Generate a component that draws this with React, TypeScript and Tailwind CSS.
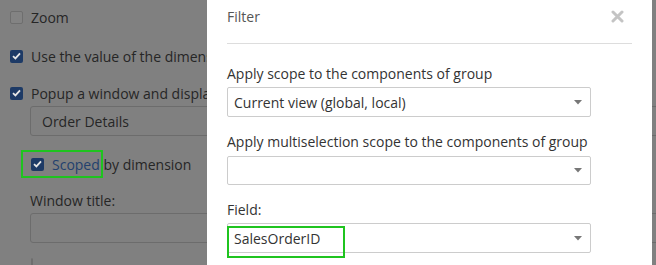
import React from "react";

const font = { fontFamily: '"Open Sans", "Noto Sans", sans-serif' };

const Check: React.FC<{ checked?: boolean }> = ({ checked }) =>
  checked ? (
    <span className="flex h-[13px] w-[13px] shrink-0 items-center justify-center rounded-[2px] bg-[#1d3a66]">
      <svg width="9" height="8" viewBox="0 0 9 8">
        <path d="M1 4.2 L3.4 6.4 L8 1.4" fill="none" stroke="#e6e6e6" strokeWidth="1.8" />
      </svg>
    </span>
  ) : (
    <span className="h-[13px] w-[13px] shrink-0 rounded-[2px] border border-[#6e6e6e] bg-[#838383]" />
  );

const Caret = () => (
  <svg width="8" height="5" viewBox="0 0 8 5" className="mr-[8px]">
    <path d="M0 0 L8 0 L4 4.5 Z" fill="#777" />
  </svg>
);

const Select: React.FC<{ value?: string; h: string; mt: string }> = ({ value, h, mt }) => (
  <div
    className={`${mt} ${h} flex w-[364px] items-center justify-between rounded-[2px] border border-[#cccccc] bg-white pl-[6px] text-[14px] text-[#333]`}
  >
    <span>{value}</span>
    <Caret />
  </div>
);

export default function App() {
  return (
    <div className="relative h-[265px] w-[656px] overflow-hidden bg-[#808080] text-[14px] text-[#262626]" style={font}>
      {/* background page (dimmed) */}
      <div className="pl-[10px]">
        <div className="mt-[7px] flex h-5 items-center gap-[8px]">
          <Check />
          <span>Zoom</span>
        </div>
        <div className="mt-[19px] flex h-5 items-center gap-[8px]">
          <Check checked />
          <span className="whitespace-nowrap">Use the value of the dimension</span>
        </div>
        <div className="mt-[17px] flex h-5 items-center gap-[8px]">
          <Check checked />
          <span className="whitespace-nowrap">Popup a window and display</span>
        </div>
        <div className="ml-[20px] mt-[3px] flex h-[30px] w-[640px] items-center rounded-[3px] border border-[#6c6c6c] pl-[11px]">
          Order Details
        </div>
        <div className="relative ml-[21px] mt-[18px] flex h-5 items-center gap-[8px]">
          <Check checked />
          <span>
            <span className="text-[#23416e]">Scoped</span> by dimension
          </span>
          <div className="absolute left-[-10px] top-[-4px] h-[28px] w-[82px] border-2 border-[#1fc41f]" />
        </div>
        <div className="ml-[20px] mt-[17px] h-5 leading-5">Window title:</div>
        <div className="ml-[20px] mt-[2px] h-[30px] w-[640px] rounded-[3px] border border-[#6c6c6c]" />
        <div className="ml-[21px] mt-[15px]">
          <Check />
        </div>
      </div>

      {/* modal */}
      <div className="absolute left-[207px] top-0 h-[265px] w-[445px] bg-white px-[20px] text-[#333]">
        <div className="flex h-[44px] items-start justify-between border-b border-[#dddddd]">
          <span className="mt-[7px] leading-5 text-[#555]">Filter</span>
          <svg width="13" height="13" viewBox="0 0 13 13" className="mr-[8px] mt-[10px]">
            <path d="M2 2 L11 11 M11 2 L2 11" stroke="#c4c4c4" strokeWidth="3" strokeLinecap="round" />
          </svg>
        </div>
        <div className="mt-[20px] leading-5">Apply scope to the components of group</div>
        <Select value="Current view (global, local)" h="h-[30px]" mt="mt-[3px]" />
        <div className="mt-[15px] leading-5">Apply multiselection scope to the components of group</div>
        <Select h="h-[29px]" mt="mt-[4px]" />
        <div className="mt-[15px] leading-5">Field:</div>
        <div className="relative">
          <Select value="SalesOrderID" h="h-[30px]" mt="mt-[3px]" />
          <div className="absolute left-0 top-[3px] h-[32px] w-[118px] border-2 border-[#1fc41f]" />
        </div>
      </div>
    </div>
  );
}
